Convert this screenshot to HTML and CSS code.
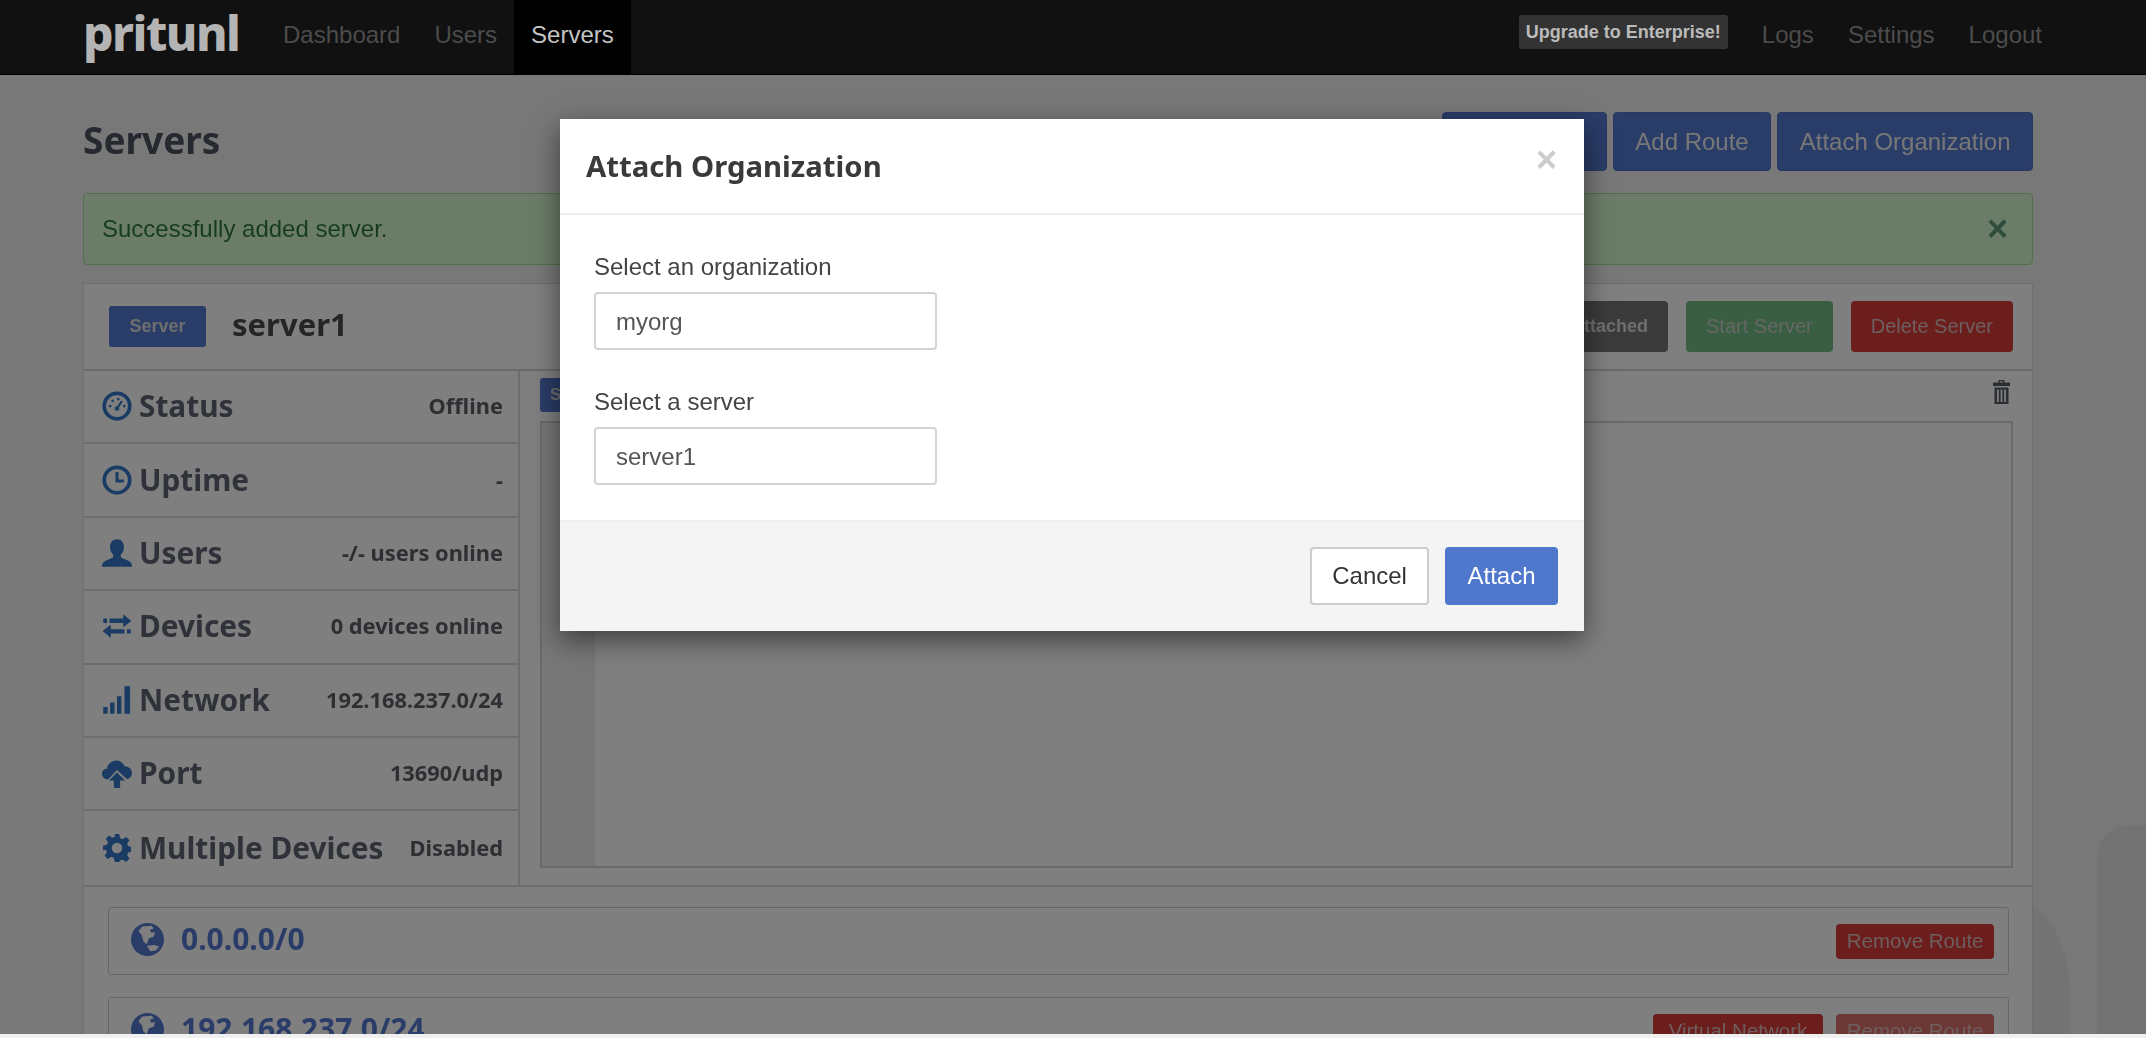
FILE: index.html
```html
<!DOCTYPE html>
<html lang="en">
<head>
  <meta charset="UTF-8" />
  <title>pritunl</title>
  <link rel="stylesheet" href="styles.css">
</head>
<body>
  <svg class="watermark" viewBox="0 0 2146 1038"><path d="M2033 905C2060 925 2070 960 2070 1000V1038H2033zM2097 860C2097 838 2110 825 2130 825H2146V1038H2097z"/></svg>

  <nav class="navbar">
    <span class="brand">pritunl</span>
    <a class="nav-link">Dashboard</a>
    <a class="nav-link">Users</a>
    <a class="nav-link active">Servers</a>
    <span class="nav-spacer"></span>
    <a class="upgrade">Upgrade to Enterprise!</a>
    <a class="nav-link">Logs</a>
    <a class="nav-link">Settings</a>
    <a class="nav-link">Logout</a>
  </nav>

  <main class="page">
    <div class="page-header">
      <h2>Servers</h2>
      <div class="actions">
        <button class="btn btn-primary">Add Server</button>
        <button class="btn btn-primary">Add Route</button>
        <button class="btn btn-primary">Attach Organization</button>
      </div>
    </div>

    <div class="alert">
      <span>Successfully added server.</span>
      <span class="alert-close">&times;</span>
    </div>

    <section class="panel">
      <div class="panel-head">
        <span class="server-badge">Server</span>
        <span class="server-name">server1</span>
        <span class="nav-spacer"></span>
        <button class="btn-sm btn-dark">No Organization Attached</button>
        <button class="btn-sm btn-success">Start Server</button>
        <button class="btn-sm btn-danger">Delete Server</button>
      </div>
      <div class="panel-body">
        <ul class="stats">
          <li><svg class="ico" viewBox="0 0 24 24"><circle cx="12" cy="12" r="10.2" fill="none" stroke="currentColor" stroke-width="3"/><path d="M12 14l4-6" stroke="currentColor" stroke-width="1.8"/><circle cx="12" cy="14" r="1.8" fill="currentColor"/><circle cx="6.5" cy="12" r="1.1" fill="currentColor"/><circle cx="8.5" cy="7.8" r="1.1" fill="currentColor"/><circle cx="13" cy="6.4" r="1.1" fill="currentColor"/><circle cx="17.8" cy="12" r="1.1" fill="currentColor"/></svg><span class="stat-name">Status</span><span class="stat-value">Offline</span></li>
          <li><svg class="ico" viewBox="0 0 24 24"><circle cx="12" cy="12" r="10.2" fill="none" stroke="currentColor" stroke-width="3"/><path d="M12 5.5v7.2h5.5" fill="none" stroke="currentColor" stroke-width="2.4"/></svg><span class="stat-name">Uptime</span><span class="stat-value">-</span></li>
          <li><svg class="ico" viewBox="0 0 24 24"><path d="M12 1c3.6 0 5.600 2.700 5.600 6.200 0 2.600-1.100 4.900-2.600 6.100v1.600c0 1 5 2.300 7.400 4 1.200.9 1.600 2.100 1.600 4.100H0c0-2 .4-3.200 1.600-4.100C4 17.200 9 15.900 9 14.900v-1.600C7.500 12.100 6.400 9.800 6.400 7.200 6.400 3.700 8.400 1 12 1z" fill="currentColor"/></svg><span class="stat-name">Users</span><span class="stat-value">-/- users online</span></li>
          <li><svg class="ico" viewBox="0 0 24 24"><path d="M6 6h11V2.500L23.500 8 17 13V9.500H6zM18 14.500V18H7v3.500L.5 16 7 11v3.500zM1 6h3v3.500H1zM20 14.500h3V18h-3z" fill="currentColor"/></svg><span class="stat-name">Devices</span><span class="stat-value">0 devices online</span></li>
          <li><svg class="ico" viewBox="0 0 24 24"><path d="M1 17.500h3.500V23H1zM6.500 14h3.500v9H6.500zM12 9h3.500v14H12zM18 1h4.500v22H18z" fill="currentColor"/></svg><span class="stat-name">Network</span><span class="stat-value">192.168.237.0/24</span></li>
          <li><svg class="ico" viewBox="0 0 24 24"><path d="M5 17C2 17 0 15 0 12.500 0 10 2 8.500 4 8.500 4.500 5 7.500 2 11.500 2c3 0 5.500 2 6.500 4.500 3.500 0 6 2.500 6 5.500 0 2.500-1.500 4.500-4 5L12 9.500zM12 11.500l6.500 6.500h-4v6h-5v-6h-4z" fill="currentColor"/></svg><span class="stat-name">Port</span><span class="stat-value">13690/udp</span></li>
          <li><svg class="ico ico-gear" viewBox="0 0 24 24"><path d="M10 0h4l.7 3.600 2.200.9 3-2 2.800 2.800-2 3 .9 2.200 3.400.7v4l-3.400.7-.9 2.200 2 3-2.800 2.800-3-2-2.200.9L14 24h-4l-.7-3.600-2.200-.9-3 2-2.800-2.800 2-3-.9-2.200L0 14v-4l3.400-.7.9-2.200-2-3 2.800-2.800 3 2 2.200-.9zM12 7.500a4.500 4.500 0 1 0 0 9 4.500 4.500 0 0 0 0-9z" fill="currentColor" fill-rule="evenodd"/></svg><span class="stat-name">Multiple Devices</span><span class="stat-value">Disabled</span></li>
        </ul>
        <div class="output">
          <div class="output-bar">
            <span class="output-tab">Server</span>
            <svg class="trash" viewBox="0 0 18 24"><path d="M6 0h6v2.500h5.500V6H.5V2.500H6zM7.500 1.200v1.300h3V1.200zM2 7.500h14V24H2zM4.500 9.500v12.500h1.800V9.500zM8.100 9.500v12.500h1.800V9.500zM11.700 9.500v12.500h1.800V9.500z" fill="currentColor" fill-rule="evenodd"/></svg>
          </div>
          <div class="output-log"><div class="log-gutter"></div></div>
        </div>
      </div>
      <div class="routes">
        <div class="route">
          <svg class="globe" viewBox="0 0 24 24"><path d="M12 0a12 12 0 1 0 0 24 12 12 0 0 0 0-24zM8 2.500L15 2l1.500 2-3 1L15 7l2.500-.5-1 3.500-3.500 1-1.500 4.500-2.500-2-1-4.500-2.500-3zM11.500 16.500l5.500-.5 3.500 1-2.500 3-4 .5z" fill="currentColor" fill-rule="evenodd"/></svg>
          <span class="route-name">0.0.0.0/0</span>
          <span class="nav-spacer"></span>
          <button class="btn-xs btn-danger">Remove Route</button>
        </div>
        <div class="route">
          <svg class="globe" viewBox="0 0 24 24"><path d="M12 0a12 12 0 1 0 0 24 12 12 0 0 0 0-24zM8 2.500L15 2l1.500 2-3 1L15 7l2.500-.5-1 3.500-3.500 1-1.500 4.500-2.500-2-1-4.500-2.500-3zM11.500 16.500l5.500-.5 3.500 1-2.500 3-4 .5z" fill="currentColor" fill-rule="evenodd"/></svg>
          <span class="route-name">192.168.237.0/24</span>
          <span class="nav-spacer"></span>
          <button class="btn-xs btn-danger btn-vnet">Virtual Network</button>
          <button class="btn-xs btn-danger disabled">Remove Route</button>
        </div>
      </div>
    </section>
  </main>

  <div class="backdrop"></div>

  <div class="modal-wrap">
    <div class="modal">
      <div class="modal-head">
        <h4>Attach Organization</h4>
        <span class="modal-close">&times;</span>
      </div>
      <div class="modal-body">
        <label>Select an organization</label>
        <div class="select">myorg</div>
        <label>Select a server</label>
        <div class="select">server1</div>
      </div>
      <div class="modal-foot">
        <button class="btn btn-default">Cancel</button>
        <button class="btn btn-attach">Attach</button>
      </div>
    </div>
  </div>

  <div class="bottom-strip"></div>
</body>
</html>
```

FILE: styles.css
```css
* {
  box-sizing: border-box;
}

html, body {
  height: 100%;
}

body {
  margin: 0;
  height: 1038px;
  overflow: hidden;
  font-family: "Liberation Sans", Arial, sans-serif;
  font-size: 24px;
  line-height: 34px;
  color: #333;
  background: #f0f0f0;
}

/* faint shapes behind the page */
.watermark {
  position: fixed;
  inset: 0;
  width: 2146px;
  height: 1038px;
  fill: #e7e7e7;
}

/* navbar sits above the backdrop */
.navbar {
  position: relative;
  z-index: 30;
  display: flex;
  align-items: stretch;
  height: 75px;
  padding: 0 87px 0 83px;
  background: #111;
  border-bottom: 1px solid #000;
}

.brand {
  width: 183px;
  align-self: center;
  margin-top: -8px;
  font-family: "Noto Sans", sans-serif;
  font-weight: 800;
  font-size: 48px;
  letter-spacing: -1.5px;
  line-height: 60px;
  color: #b4b4b4;
}

.nav-link {
  display: flex;
  align-items: center;
  padding: 0 17px 5px;
  color: #4c4c4c;
}

.nav-link.active {
  background: #000;
  color: #c4c4c4;
}

.nav-spacer {
  flex: 1;
}

.upgrade {
  align-self: center;
  margin: -10px 17px 0 0;
  padding: 0 7px;
  height: 34px;
  font-size: 18px;
  font-weight: 700;
  line-height: 34px;
  color: #bbb;
  background: #333;
  border-radius: 3px;
}

.page {
  position: relative;
  padding: 37px 113px 0 83px;
}

.page-header {
  display: flex;
  justify-content: space-between;
  align-items: center;
  height: 59px;
  margin-bottom: 22px;
}

h2 {
  margin: -3px 0 0;
  font-family: "Noto Sans", sans-serif;
  font-weight: 700;
  font-size: 37px;
  color: #4e5262;
}

.actions {
  display: flex;
  gap: 6px;
}

.btn, .btn-sm, .btn-xs {
  font-family: inherit;
  border: 1px solid transparent;
  border-radius: 4px;
  white-space: nowrap;
  padding: 0;
}

.btn {
  height: 59px;
  padding: 0 21.5px;
  font-size: 24px;
}

.btn-primary {
  color: #eee;
  background: #5479d0;
  border-color: #4e70c2;
}

.alert {
  display: flex;
  justify-content: space-between;
  align-items: center;
  height: 72px;
  padding: 0 24px 0 18px;
  margin-bottom: 18px;
  color: #2f7a3c;
  background: #d6fad2;
  border: 1px solid #a9dd9f;
  border-radius: 4px;
}

.alert-close {
  font-size: 36px;
  font-weight: 700;
  color: #5c9a78;
}

.panel {
  background: #fff;
  border: 1px solid #ddd;
  border-bottom: 0;
}

.panel-head {
  display: flex;
  align-items: center;
  gap: 18px;
  height: 87px;
  padding: 0 19px 0 25px;
  border-bottom: 2px solid #d4d4d4;
}

.server-badge {
  width: 97px;
  height: 41px;
  margin-right: 8px;
  text-align: center;
  font-size: 18px;
  font-weight: 700;
  line-height: 41px;
  color: #ddd;
  background: #5479d0;
  border-radius: 3px;
}

.server-name {
  margin-top: -5px;
  font-family: "Noto Sans", sans-serif;
  font-weight: 700;
  font-size: 31px;
  color: #4a4a4a;
}

.btn-sm {
  height: 51px;
  padding: 0 19px;
  font-size: 20px;
}

.btn-dark {
  font-size: 18px;
  font-weight: 700;
  color: #ddd;
  background: #777;
}

.btn-success {
  color: #ccc;
  background: #74bd84;
}

.btn-danger {
  color: #dcbcbc;
  background: #d63c38;
}

.panel-body {
  display: flex;
  border-bottom: 2px solid #ddd;
}

.stats {
  width: 436px;
  margin: 0;
  padding: 0;
  list-style: none;
  border-right: 2px solid #ddd;
}

.stats li {
  display: flex;
  align-items: center;
  height: 73.4px;
  padding: 0 15px 1px 18px;
  border-bottom: 2px solid #ddd;
}

.stats li:last-child {
  border-bottom: 0;
}

.ico {
  flex: none;
  width: 30px;
  height: 30px;
  margin-right: 7px;
  color: #3478c8;
}

.ico-gear {
  width: 28px;
  height: 28px;
  margin: 0 8px 0 1px;
}

.stat-name {
  flex: 1;
  font-family: "Noto Sans", sans-serif;
  font-weight: 700;
  font-size: 29.8px;
  color: #606474;
}

.stat-value {
  font-family: "Noto Sans", sans-serif;
  font-weight: 700;
  font-size: 21.8px;
  color: #5c5e66;
}

.output {
  flex: 1;
  padding: 7px 19px 17px 20px;
  min-width: 0;
}

.output-bar {
  display: flex;
  justify-content: space-between;
  height: 43px;
}

.output-tab {
  height: 34px;
  padding: 0 10px;
  font-size: 17px;
  font-weight: 700;
  line-height: 34px;
  color: #ddd;
  background: #5479d0;
  border-radius: 3px;
}

.trash {
  width: 19px;
  height: 24px;
  margin: 2px 2px 0 0;
  color: #555a65;
}

.output-log {
  height: 447px;
  background: #fff;
  border: 2px solid #d4d4d4;
}

.log-gutter {
  width: 53px;
  height: 100%;
  background: #eee;
}

.routes {
  padding: 20px 23px 0 24px;
}

.route {
  display: flex;
  align-items: center;
  gap: 13px;
  height: 68px;
  margin-bottom: 22px;
  padding: 0 14px 0 22px;
  border: 1px solid #ccc;
  border-radius: 3px;
}

.globe {
  width: 33px;
  height: 33px;
  margin: -3px 4px 0 0;
  color: #5479d0;
}

.route-name {
  margin-top: -4px;
  font-family: "Noto Sans", sans-serif;
  font-weight: 700;
  font-size: 30px;
  color: #5479d0;
}

.btn-xs {
  height: 35px;
  padding: 0 9.5px;
  font-size: 20.5px;
}

.btn-xs.btn-vnet {
  padding: 0 15px;
}

.btn-xs.disabled {
  background: #d9706c;
}

/* modal layers */
.backdrop {
  position: fixed;
  inset: 0;
  z-index: 20;
  background: rgba(0, 0, 0, .5);
}

.modal-wrap {
  position: fixed;
  inset: 0;
  z-index: 40;
  display: flex;
  justify-content: center;
  padding: 119px 2px 0 0;
  pointer-events: none;
}

.modal {
  width: 1024px;
  height: 512px;
  background: #fff;
  box-shadow: 0 9px 26px rgba(0, 0, 0, .5);
}

.modal-head {
  display: flex;
  justify-content: space-between;
  align-items: center;
  height: 96px;
  padding: 0 27px 0 26px;
  border-bottom: 2px solid #eee;
}

h4 {
  margin: 0;
  font-family: "Noto Sans", sans-serif;
  font-weight: 700;
  font-size: 29.3px;
  color: #3a3a3a;
}

.modal-close {
  margin-top: -12px;
  font-size: 36px;
  font-weight: 700;
  color: #ccc;
}

.modal-body {
  height: 305px;
  padding: 35px 34px 0 34px;
}

label {
  display: block;
  height: 34px;
  margin-bottom: 8px;
  color: #444;
}

.select {
  width: 343px;
  height: 58px;
  margin-bottom: 35px;
  padding: 0 20px;
  line-height: 55px;
  color: #555;
  background: #fff;
  border: 2px solid #d3d3d3;
  border-radius: 4px;
}

.modal-foot {
  display: flex;
  justify-content: flex-end;
  gap: 16px;
  height: 111px;
  padding: 25px 26px 0 0;
  background: #f4f4f4;
  border-top: 2px solid #eee;
}

.modal-foot .btn {
  height: 58px;
}

.btn.btn-default {
  padding: 0 20px;
  color: #333;
  background: #fff;
  border: 2px solid #ccc;
}

.btn-attach {
  color: #fff;
  background: #4f78cc;
}

.bottom-strip {
  position: fixed;
  left: 0;
  right: 0;
  bottom: 0;
  z-index: 50;
  height: 4px;
  background: #f0f0f0;
}
```
